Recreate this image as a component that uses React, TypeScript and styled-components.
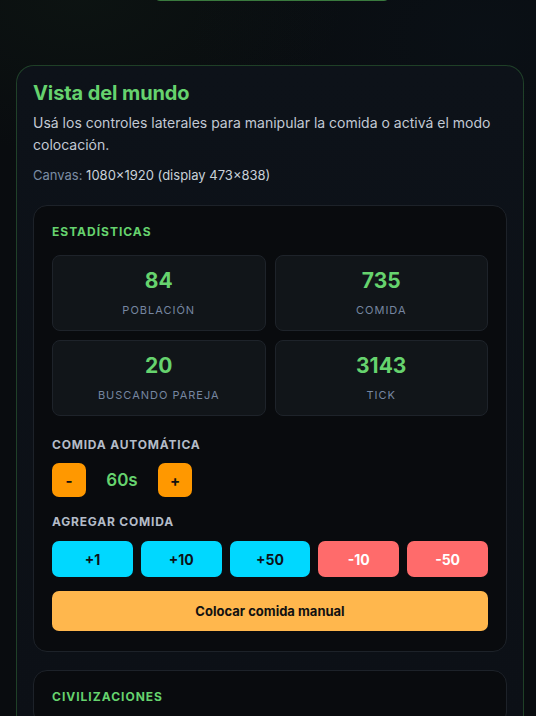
import React from 'react';
import styled, { createGlobalStyle } from 'styled-components';

const GlobalStyle = createGlobalStyle`
  html, body {
    margin: 0;
    padding: 0;
    background: #090c0f;
    overflow: hidden;
  }
  body {
    font-family: Inter, "Noto Sans", "Liberation Sans", sans-serif;
    color: #c9d1d9;
    min-height: 716px;
    background:
      radial-gradient(ellipse 380px 220px at 15% 0%, rgba(40, 80, 40, 0.1), transparent 70%),
      radial-gradient(ellipse 420px 300px at 90% 5%, rgba(20, 50, 80, 0.1), transparent 70%),
      #090c0f;
  }
`;

const Page = styled.div`
  padding: 0 12px 40px 16px;
  display: flex;
  flex-direction: column;
`;

const TopButton = styled.div`
  align-self: center;
  box-sizing: border-box;
  width: 236px;
  height: 40px;
  margin: -39px 0 0 4px;
  border: 1px solid #3a7a3e;
  border-radius: 6px;
  background: #0f1a12;
`;

const Card = styled.section`
  margin-top: 64px;
  background: linear-gradient(180deg, #0d1219 0%, #0c1016 100%);
  border: 1px solid rgba(76, 175, 80, 0.3);
  border-radius: 18px;
  padding: 13px 16px 16px;
`;

const Title = styled.h1`
  margin: 0;
  font-size: 20px;
  line-height: 28px;
  font-weight: 700;
  color: #66d36e;
  letter-spacing: -0.1px;
`;

const Description = styled.p`
  margin: 5px 0 0;
  font-size: 14px;
  line-height: 22px;
  color: #c2c9d4;
`;

const CanvasInfo = styled.p`
  margin: 10px 0 0;
  font-size: 13px;
  line-height: 18px;
  color: #c9d1d9;

  span {
    color: #7b8ca3;
  }
`;

const Panel = styled.div<{ $first?: boolean }>`
  margin-top: ${p => (p.$first ? '21px' : '18px')};
  background: #090b0e;
  border: 1px solid #1d2229;
  border-radius: 14px;
  padding: 18px 18px 20px;
`;

const PanelTitle = styled.h2`
  margin: 0;
  font-size: 12px;
  line-height: 16px;
  font-weight: 700;
  letter-spacing: 1px;
  color: #66d36e;
  text-transform: uppercase;
`;

const StatsGrid = styled.div`
  margin-top: 15px;
  display: grid;
  grid-template-columns: 1fr 1fr;
  gap: 9px;
`;

const StatCard = styled.div`
  height: 76px;
  box-sizing: border-box;
  background: #111519;
  border: 1px solid #1e232a;
  border-radius: 8px;
  display: flex;
  flex-direction: column;
  align-items: center;
  justify-content: center;
  gap: 10px;
`;

const StatValue = styled.div`
  font-size: 21px;
  line-height: 24px;
  font-weight: 700;
  color: #66d36e;
`;

const StatLabel = styled.div`
  font-size: 11px;
  line-height: 14px;
  letter-spacing: 1px;
  color: #7686a0;
  text-transform: uppercase;
`;

const SectionLabel = styled.div<{ $top: number }>`
  margin-top: ${p => p.$top}px;
  font-size: 12px;
  line-height: 16px;
  font-weight: 700;
  letter-spacing: 0.8px;
  color: #b4bcc8;
  text-transform: uppercase;
`;

const Stepper = styled.div`
  margin-top: 10px;
  display: flex;
  align-items: center;
  gap: 12px;
`;

const StepButton = styled.button`
  width: 34px;
  height: 34px;
  border: none;
  border-radius: 7px;
  background: #ff9800;
  color: #111;
  font-family: inherit;
  font-size: 15px;
  font-weight: 700;
  padding: 0;
  cursor: pointer;
`;

const StepValue = styled.span`
  width: 48px;
  text-align: center;
  font-size: 17px;
  font-weight: 600;
  color: #66d36e;
`;

const FoodGrid = styled.div`
  margin-top: 11px;
  display: grid;
  grid-template-columns: repeat(5, 1fr);
  gap: 8px;
`;

const FoodButton = styled.button<{ $tone: 'add' | 'remove' }>`
  height: 36px;
  border: none;
  border-radius: 7px;
  background: ${p => (p.$tone === 'add' ? '#00d8ff' : '#ff6b6b')};
  color: ${p => (p.$tone === 'add' ? '#0d1117' : '#ffffff')};
  font-family: inherit;
  font-size: 14px;
  font-weight: 700;
  cursor: pointer;
`;

const ManualButton = styled.button`
  margin-top: 14px;
  width: 100%;
  height: 40px;
  border: none;
  border-radius: 7px;
  background: #ffb74d;
  color: #111;
  font-family: inherit;
  font-size: 13px;
  font-weight: 700;
  cursor: pointer;
`;

const stats = [
  { value: '84', label: 'Población' },
  { value: '735', label: 'Comida' },
  { value: '20', label: 'Buscando pareja' },
  { value: '3143', label: 'Tick' },
];

const foodActions: { label: string; tone: 'add' | 'remove' }[] = [
  { label: '+1', tone: 'add' },
  { label: '+10', tone: 'add' },
  { label: '+50', tone: 'add' },
  { label: '-10', tone: 'remove' },
  { label: '-50', tone: 'remove' },
];

const App: React.FC = () => {
  return (
    <>
      <GlobalStyle />
      <Page>
        <TopButton />
        <Card>
          <Title>Vista del mundo</Title>
          <Description>
            Usá los controles laterales para manipular la comida o activá el modo colocación.
          </Description>
          <CanvasInfo>
            <span>Canvas:</span> 1080x1920 (display 473x838)
          </CanvasInfo>

          <Panel $first>
            <PanelTitle>Estadísticas</PanelTitle>
            <StatsGrid>
              {stats.map(s => (
                <StatCard key={s.label}>
                  <StatValue>{s.value}</StatValue>
                  <StatLabel>{s.label}</StatLabel>
                </StatCard>
              ))}
            </StatsGrid>

            <SectionLabel $top={21}>Comida automática</SectionLabel>
            <Stepper>
              <StepButton>-</StepButton>
              <StepValue>60s</StepValue>
              <StepButton>+</StepButton>
            </Stepper>

            <SectionLabel $top={17}>Agregar comida</SectionLabel>
            <FoodGrid>
              {foodActions.map(a => (
                <FoodButton key={a.label} $tone={a.tone}>
                  {a.label}
                </FoodButton>
              ))}
            </FoodGrid>
            <ManualButton>Colocar comida manual</ManualButton>
          </Panel>

          <Panel>
            <PanelTitle>Civilizaciones</PanelTitle>
          </Panel>
        </Card>
      </Page>
    </>
  );
};

export default App;
